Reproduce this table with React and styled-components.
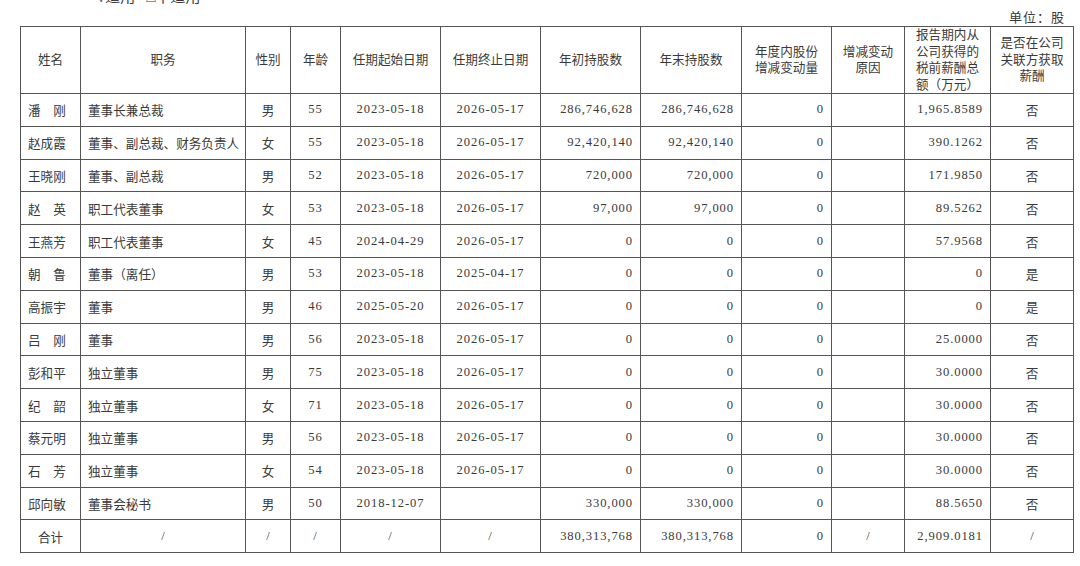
import React from 'react'
import styled, { createGlobalStyle } from 'styled-components'

const GlobalStyle = createGlobalStyle`
  html, body {
    margin: 0;
    padding: 0;
    background: #fff;
  }
  body {
    font-family: "Liberation Serif", "Noto Sans CJK SC", serif;
    color: #3a3a3a;
  }
`

const Page = styled.div`
  width: 1080px;
  height: 566px;
  overflow: hidden;
  padding: 0 7px 0 20px;
  box-sizing: border-box;
`

const Applicable = styled.div`
  margin: -10px 0 0 77px;
  height: 15px;
  font-size: 15px;
  line-height: 15px;
  white-space: pre;
`

const Unit = styled.div`
  height: 21px;
  display: flex;
  justify-content: flex-end;
  align-items: flex-end;
  font-size: 13px;
  line-height: 13px;
  padding: 0 8px 2px 0;
  box-sizing: border-box;
  letter-spacing: 1px;
`

const Table = styled.table`
  width: 1053px;
  table-layout: fixed;
  border-collapse: collapse;
  font-size: 12.6px;
  border: 1.5px solid #555;
`

const HeadRow = styled.tr`
  height: 65px;
`

const Row = styled.tr`
  height: 32.8px;
`

const Th = styled.th`
  border: 1px solid #555;
  font-weight: normal;
  text-align: center;
  line-height: 16.5px;
  padding: 0 2px;
`

const Td = styled.td`
  border: 1px solid #555;
  padding: 0 7px;
  white-space: nowrap;
  text-align: ${p => p.$align || 'center'};
  letter-spacing: ${p => (p.$num ? '0.9px' : '0')};
`

const widths = [60, 165, 45, 50, 100, 100, 100, 101, 90, 73, 86, 83]

const headers = [
  ['姓名'],
  ['职务'],
  ['性别'],
  ['年龄'],
  ['任期起始日期'],
  ['任期终止日期'],
  ['年初持股数'],
  ['年末持股数'],
  ['年度内股份', '增减变动量'],
  ['增减变动', '原因'],
  ['报告期内从', '公司获得的', '税前薪酬总', '额（万元）'],
  ['是否在公司', '关联方获取', '薪酬']
]

const rows = [
  ['潘　刚', '董事长兼总裁', '男', '55', '2023-05-18', '2026-05-17', '286,746,628', '286,746,628', '0', '', '1,965.8589', '否'],
  ['赵成霞', '董事、副总裁、财务负责人', '女', '55', '2023-05-18', '2026-05-17', '92,420,140', '92,420,140', '0', '', '390.1262', '否'],
  ['王晓刚', '董事、副总裁', '男', '52', '2023-05-18', '2026-05-17', '720,000', '720,000', '0', '', '171.9850', '否'],
  ['赵　英', '职工代表董事', '女', '53', '2023-05-18', '2026-05-17', '97,000', '97,000', '0', '', '89.5262', '否'],
  ['王燕芳', '职工代表董事', '女', '45', '2024-04-29', '2026-05-17', '0', '0', '0', '', '57.9568', '否'],
  ['朝　鲁', '董事（离任）', '男', '53', '2023-05-18', '2025-04-17', '0', '0', '0', '', '0', '是'],
  ['高振宇', '董事', '男', '46', '2025-05-20', '2026-05-17', '0', '0', '0', '', '0', '是'],
  ['吕　刚', '董事', '男', '56', '2023-05-18', '2026-05-17', '0', '0', '0', '', '25.0000', '否'],
  ['彭和平', '独立董事', '男', '75', '2023-05-18', '2026-05-17', '0', '0', '0', '', '30.0000', '否'],
  ['纪　韶', '独立董事', '女', '71', '2023-05-18', '2026-05-17', '0', '0', '0', '', '30.0000', '否'],
  ['蔡元明', '独立董事', '男', '56', '2023-05-18', '2026-05-17', '0', '0', '0', '', '30.0000', '否'],
  ['石　芳', '独立董事', '女', '54', '2023-05-18', '2026-05-17', '0', '0', '0', '', '30.0000', '否'],
  ['邱向敏', '董事会秘书', '男', '50', '2018-12-07', '', '330,000', '330,000', '0', '', '88.5650', '否']
]

const total = ['合计', '/', '/', '/', '/', '/', '380,313,768', '380,313,768', '0', '/', '2,909.0181', '/']

// alignment per column for the body rows
const aligns = ['left', 'left', 'center', 'center', 'center', 'center', 'right', 'right', 'right', 'center', 'right', 'center']
const numeric = [false, false, false, true, true, true, true, true, true, false, true, false]

export default function App () {
  return (
    <Page>
      <GlobalStyle />
      <Applicable>√适用   □不适用</Applicable>
      <Unit>单位：股</Unit>
      <Table>
        <colgroup>
          {widths.map((w, i) => <col key={i} style={{ width: w }} />)}
        </colgroup>
        <thead>
          <HeadRow>
            {headers.map((lines, i) => (
              <Th key={i}>
                {lines.map((l, j) => <div key={j}>{l}</div>)}
              </Th>
            ))}
          </HeadRow>
        </thead>
        <tbody>
          {rows.map((r, i) => (
            <Row key={i}>
              {r.map((c, j) => (
                <Td key={j} $align={aligns[j]} $num={numeric[j]}>{c}</Td>
              ))}
            </Row>
          ))}
          <Row>
            {total.map((c, j) => (
              <Td key={j} $align={j === 0 || c === '/' ? 'center' : aligns[j]} $num={numeric[j]}>{c}</Td>
            ))}
          </Row>
        </tbody>
      </Table>
    </Page>
  )
}
